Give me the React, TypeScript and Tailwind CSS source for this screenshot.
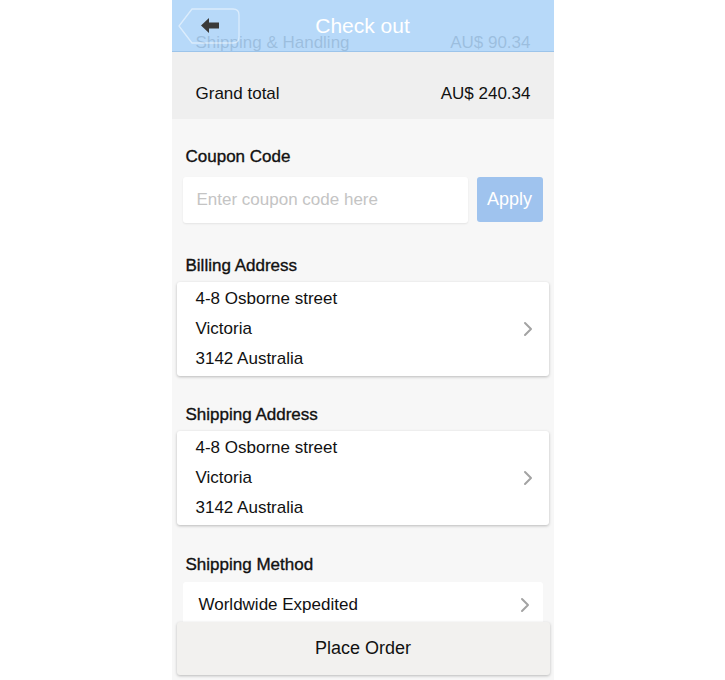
const font = { fontFamily: '"Liberation Sans", Arial, sans-serif' };

const addressLines = ["4-8 Osborne street", "Victoria", "3142 Australia"];

function Chevron() {
  return (
    <svg width="10" height="16" viewBox="0 0 10 16" className="shrink-0">
      <path d="M2 2 L8 8 L2 14" fill="none" stroke="#a3a3a3" strokeWidth="2" strokeLinecap="round" strokeLinejoin="round" />
    </svg>
  );
}

function BackButton() {
  return (
    <div className="absolute left-[6px] top-[8px] w-[62px] h-[36px]">
      <svg width="62" height="36" viewBox="0 0 62 36" className="absolute inset-0">
        <path
          d="M14 1 H55 Q61 1 61 7 V29 Q61 35 55 35 H14 L1 18 Z"
          fill="none"
          stroke="rgba(255,255,255,0.5)"
          strokeWidth="1.3"
          strokeLinejoin="round"
        />
      </svg>
      <svg width="18" height="15" viewBox="0 0 18 15" className="absolute left-[23px] top-[10px]">
        <path d="M0 7.5 L8 0 V4.5 H18 V10.5 H8 V15 Z" fill="#3a3a3a" />
      </svg>
    </div>
  );
}

function SectionLabel({ children }: { children: string }) {
  return (
    <p className="px-[14px] h-[16px] text-[17px] leading-[16px] text-[#111] [-webkit-text-stroke:0.35px_#111]">
      {children}
    </p>
  );
}

function AddressCard() {
  return (
    <div className="mx-[5px] mt-[8px] bg-white rounded-[3px] shadow-[0_1px_3px_rgba(0,0,0,0.25)] flex items-center pl-[19px] pr-[16px] py-[2px]">
      <div className="flex-1">
        {addressLines.map((line) => (
          <p key={line} className="h-[30px] flex items-center text-[17px] text-[#111]">
            {line}
          </p>
        ))}
      </div>
      <Chevron />
    </div>
  );
}

export default function App() {
  return (
    <div className="w-full h-[680px] bg-white flex justify-center" style={font}>
      <div className="relative w-[382px] h-[680px] overflow-hidden bg-[#f7f7f7]">
        {/* summary rows, scrolled under the header */}
        <div className="bg-[#efefef] pt-[17px]">
          <div className="h-[51px] flex items-center justify-between pl-[24px] pr-[23px] text-[17px] text-[#222]">
            <span>Shipping &amp; Handling</span>
            <span>AU$ 90.34</span>
          </div>
          <div className="h-[51px] flex items-center justify-between pl-[24px] pr-[23px] text-[17px] text-[#111]">
            <span>Grand total</span>
            <span>AU$ 240.34</span>
          </div>
        </div>

        <div className="pt-[30px]">
          <SectionLabel>Coupon Code</SectionLabel>
          <div className="flex gap-[9px] px-[11px] mt-[12px]">
            <div className="flex-1 h-[46px] bg-white rounded-[3px] shadow-[0_1px_2px_rgba(0,0,0,0.08)] flex items-center px-[14px] text-[17px] text-[#c4c4c4]">
              Enter coupon code here
            </div>
            <button className="w-[66px] h-[45px] bg-[#9fc3ee] rounded-[3px] text-white text-[18px]">
              Apply
            </button>
          </div>

          <div className="mt-[35px]">
            <SectionLabel>Billing Address</SectionLabel>
            <AddressCard />
          </div>

          <div className="mt-[31px]">
            <SectionLabel>Shipping Address</SectionLabel>
            <AddressCard />
          </div>

          <div className="mt-[32px]">
            <SectionLabel>Shipping Method</SectionLabel>
            <div className="mx-[11px] mt-[9px] h-[46px] bg-white rounded-[3px] flex items-center justify-between pl-[16px] pr-[13px] text-[17px] text-[#111]">
              <span>Worldwide Expedited</span>
              <Chevron />
            </div>
          </div>
        </div>

        {/* header overlay */}
        <div className="absolute inset-x-0 top-0 h-[52px] bg-[rgba(175,214,250,0.87)] border-b border-[#9cc4ea] flex items-center justify-center">
          <span className="text-white text-[21px]">Check out</span>
          <BackButton />
        </div>

        {/* place order bar */}
        <div className="absolute left-[5px] right-[4px] top-[622px] h-[53px] bg-[#f2f1ef] rounded-[3px] shadow-[0_1px_3px_rgba(0,0,0,0.25)] flex items-center justify-center text-[18px] text-[#111]">
          Place Order
        </div>
      </div>
    </div>
  );
}
